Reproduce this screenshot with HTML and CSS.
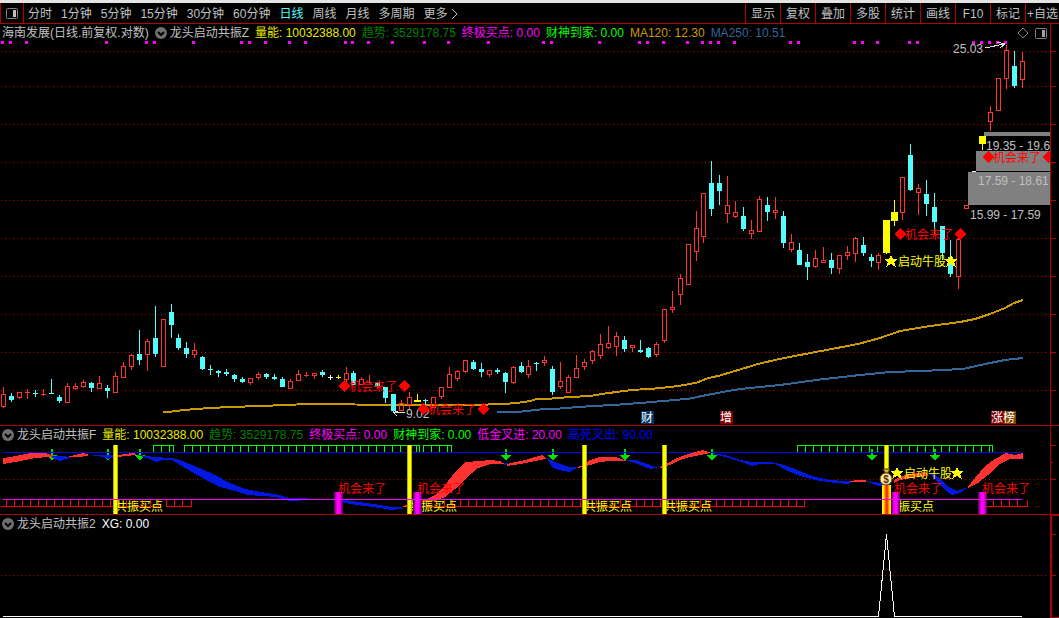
FILE: index.html
```
<!DOCTYPE html>
<html lang="zh-CN">
	<head>
		<meta charset="utf-8">
		<title>海南发展 日线</title>
		<link rel="stylesheet" href="styles.css">
	</head>
	<body>
		<header class="toolbar">
			<button class="side" aria-label="侧栏">
				<svg width="12" height="11" viewBox="0 0 12 11"><rect x="0.5" y="0.5" width="11" height="10" rx="1" fill="none" stroke="#808080"/><path d="M7 2h3v7h-3z" fill="#c0c0c0"/></svg>
			</button>
			<nav class="periods">
				<button>分时</button>
				<button>1分钟</button>
				<button>5分钟</button>
				<button>15分钟</button>
				<button>30分钟</button>
				<button>60分钟</button>
				<button class="active">日线</button>
				<button>周线</button>
				<button>月线</button>
				<button>多周期</button>
				<button>更多<svg width="7" height="12" viewBox="0 0 7 12"><path d="M1 1l5 5-5 5" fill="none" stroke="#c0c0c0"/></svg></button>
			</nav>
			<nav class="tools">
				<button>显示</button>
				<button>复权</button>
				<button>叠加</button>
				<button>多股</button>
				<button>统计</button>
				<button>画线</button>
				<button>F10</button>
				<button>标记</button>
				<button>+自选</button>
			</nav>
		</header>

		<main>
			<section class="panel">
				<div class="legend">
					<h1>海南发展(日线.前复权.对数)</h1>
					<button class="fold" aria-label="指标菜单"><svg width="12" height="12" viewBox="0 0 12 12"><circle cx="6" cy="6" r="6" fill="#707070"/><path d="M3 5l3 3 3-3" fill="none" stroke="#000" stroke-width="2"/></svg></button>
					<h2>龙头启动共振Z</h2>
					<span class="yellow">量能: 10032388.00</span>
					<span class="dark-green">趋势: 3529178.75</span>
					<span class="magenta">终极买点: 0.00</span>
					<span class="green">财神到家: 0.00</span>
					<span class="gold">MA120: 12.30</span>
					<span class="steel">MA250: 10.51</span>
					<div class="legend-tools">
						<button aria-label="标记"><svg width="12" height="12" viewBox="0 0 12 12"><path d="M6 1l5 5-5 5-5-5z" fill="none" stroke="#808080"/></svg></button>
						<button aria-label="布局"><svg width="12" height="11" viewBox="0 0 12 11"><rect x="0.5" y="0.5" width="11" height="10" rx="1" fill="none" stroke="#808080"/><path d="M7 2h3v7h-3z" fill="#a0a0a0"/></svg></button>
					</div>
				</div>
				<svg class="chart" viewBox="0 40 1059 385" role="img" aria-label="日线K线图">
					<g id="grid"></g>
					<g id="signals" fill="#ff00ff"></g>
					<path class="ma gold-line" d="M163 412L172 411.500 180 410.500 190 409.500 203 408.500 220 407.500 245 406.500 262 406 285 405 320 403.500 347 403.500 355 404.500 410 405 480 405 497 404 510 403.500 520 402.500 530 401 537 399 552 398.500 570 397 590 396 605 393.500 620 391.500 632 390 655 388.500 670 387 685 385 697 382.500 707 378.500 720 375.500 740 369.500 758 364 775 360 792 356.500 813 352.500 837 348 860 343.500 880 338 900 331 930 326 960 322 975 319 990 314 1005 308 1014 303 1023 300"/>
					<path class="ma steel-line" d="M497 412.500L513 412 522 411.500 545 409 560 408.500 578 407 595 406 620 404.500 640 403 657 401.500 675 400 690 398.500 697 397 707 395 725 391.500 740 389 780 385 820 379.500 860 375 890 372 920 371 945 370 965 368.500 985 364 1005 360 1023 358"/>
					<g id="candles"></g>
					<g fill="#808080">
						<rect x="984" y="132" width="66" height="4"/>
						<rect x="976" y="151" width="74" height="20"/>
						<rect x="968" y="172" width="82" height="33"/>
					</g>
					<path d="M982 136h1v14h-1zM979 136h7v8h-7z" fill="#ffff00"/>
					<rect x="972" y="171" width="4" height="1" fill="#fff"/>
					<g class="quote">
						<text x="953" y="53">25.03</text>
						<text x="406" y="418">9.02</text>
						<text x="986" y="150">19.35 - 19.6</text>
						<text x="978" y="185">17.59 - 18.61</text>
						<text x="970" y="219">15.99 - 17.59</text>
					</g>
					<path class="pointer" d="M985 48L1004 44M997 42L1005 44 1000 48"/>
					<path class="pointer" d="M405 412.500H394M397 416L394 412.500 398 411"/>
					<g id="chances"></g>
					<g class="badges">
						<rect x="641" y="411" width="13" height="13" fill="#003366"/>
						<text x="641" y="422">财</text>
						<rect x="720" y="411" width="13" height="13" fill="#800000"/>
						<text x="720" y="422">增</text>
						<rect x="991" y="411" width="13" height="13" fill="#800000"/>
						<rect x="1004" y="411" width="12" height="13" fill="#804000"/>
						<text x="991" y="422">涨榜</text>
					</g>
					<rect x="1051" y="145" width="8" height="20" fill="#000"/>
					<g class="axis">
						<rect x="1050" y="40" width="1" height="385"/>
						<rect x="1051" y="162" width="5" height="1"/>
					</g>
				</svg>
			</section>

			<section class="panel">
				<div class="legend">
					<button class="fold" aria-label="指标菜单"><svg width="12" height="12" viewBox="0 0 12 12"><circle cx="6" cy="6" r="6" fill="#707070"/><path d="M3 5l3 3 3-3" fill="none" stroke="#000" stroke-width="2"/></svg></button>
					<h2>龙头启动共振F</h2>
					<span class="yellow">量能: 10032388.00</span>
					<span class="dark-green">趋势: 3529178.75</span>
					<span class="magenta">终极买点: 0.00</span>
					<span class="green">财神到家: 0.00</span>
					<span class="magenta">低金叉进: 20.00</span>
					<span class="blue">高死叉出: 90.00</span>
				</div>
				<svg class="chart" viewBox="0 442 1059 72" role="img" aria-label="共振副图">
					<defs>
						<linearGradient id="purple">
							<stop offset="0" stop-color="#500050"/>
							<stop offset="0.35" stop-color="#ff00ff"/>
							<stop offset="0.65" stop-color="#ff00ff"/>
							<stop offset="1" stop-color="#500050"/>
						</linearGradient>
						<linearGradient id="fire">
							<stop offset="0" stop-color="#ffff00"/>
							<stop offset="0.2" stop-color="#ffe000"/>
							<stop offset="0.45" stop-color="#ff3000"/>
							<stop offset="0.6" stop-color="#ff3000"/>
							<stop offset="0.85" stop-color="#ffe000"/>
							<stop offset="1" stop-color="#ffff00"/>
						</linearGradient>
					</defs>
					<line class="dots" x1="1" y1="479.500" x2="1048" y2="479.500"/>
					<g id="combs"></g>
					<g id="arrows" fill="#00e000"></g>
					<rect x="3" y="452" width="1019" height="1" fill="#0000ff"/>
					<g class="band-blue">
						<path d="M50 456L60 456 72 457 66 459 60 461 56 460z"/>
						<path d="M90 455L100 455 118 455 112 458 108 459 103 457z"/>
						<path d="M137 455L148 456 154 457 172 458 180 460 192 465 202 469 215 475 230 483 245 489 260 492 275 494 290 498 325 499 345 500 360 502 380 505 392 507 402 507 402 509 390 510 380 508 365 506 350 504 330 500 310 500 290 501 275 497 262 496 248 495 235 491 220 487 210 482 197 475 185 468 172 460 163 460 156 462 150 459z"/>
						<path d="M502 463L509 463 505 465z"/>
						<path d="M547 458L553 461 560 464 570 467 578 467 570 472 563 471 553 468 550 463z"/>
						<path d="M625 460L635 460 645 463 655 467 662 465 656 468 650 469 645 467 635 463z"/>
						<path d="M711 453L725 455 740 460 752 462 770 462 780 464 790 467 802 472 815 477 830 480 845 481 855 481 848 484 835 483 815 480 800 476 788 471 775 464 760 464 752 466 742 462 725 457z"/>
						<path d="M866 481L874 482 884 484 884 486 878 486z"/>
						<path d="M928 473L935 475 940 478 947 486 957 491 968 487 960 493 952 495 945 490 938 482z"/>
					</g>
					<g class="band-red">
						<path d="M3 458L10 457 20 455 30 453 45 453 56 456 48 457 35 458 25 460 15 462 8 463 3 464z"/>
						<path d="M67 457L75 455 83 453 90 455 80 457z"/>
						<path d="M118 455L125 454 133 453 137 454 135 455 118 457z"/>
						<path d="M402 507L409 504 409 507z"/>
						<path d="M425 500L435 495 445 485 455 472 465 462 480 461 490 460 500 461 505 464 490 464 478 468 465 479 455 489 445 497 435 501 420 502z"/>
						<path d="M507 464L515 462 525 460 535 457 543 455 546 459 535 461 520 464 507 466z"/>
						<path d="M578 467L583 465 590 460 600 457 615 457 622 459 627 461 610 461 600 462 590 465 578 468z"/>
						<path d="M662 465L668 463 675 459 685 455 695 452 703 450 711 453 700 455 690 457 680 460 670 465 660 468z"/>
						<path d="M850 481L858 480 866 480 866 482 850 482z"/>
						<path d="M894 480L900 477 908 474 925 472 929 475 910 478 900 480 894 483z"/>
						<path d="M968 487L975 478 985 466 995 459 1006 453 1015 455 1023 453 1023 459 1010 459 1000 464 988 475 978 483 968 488z"/>
					</g>
					<g class="label-yellow">
						<text x="115" y="511">共振买点</text>
						<text x="409" y="511">共振买点</text>
						<text x="584" y="511">共振买点</text>
						<text x="664" y="511">共振买点</text>
						<text x="886" y="511">共振买点</text>
					</g>
					<g id="bars"></g>
					<rect x="3" y="499" width="1019" height="1" fill="#ff00ff"/>
					<g class="label-red">
						<text x="338" y="493">机会来了</text>
						<text x="417" y="493">机会来了</text>
						<text x="894" y="493">机会来了</text>
						<text x="982" y="493">机会来了</text>
					</g>
					<g id="bull"></g>
					<g class="bag">
						<path d="M883 469h7l-2 4h-3z" fill="#d8b040" stroke="#503000"/>
						<circle cx="886" cy="479" r="6" fill="#ffe8a0" stroke="#704818"/>
						<text x="886" y="483">$</text>
					</g>
					<g class="axis">
						<rect x="1050" y="442" width="1" height="72"/>
						<rect x="1051" y="445" width="5" height="1"/>
						<rect x="1051" y="462" width="2" height="1"/>
						<rect x="1051" y="479" width="5" height="1"/>
					</g>
				</svg>
			</section>

			<section class="panel last">
				<div class="legend">
					<button class="fold" aria-label="指标菜单"><svg width="12" height="12" viewBox="0 0 12 12"><circle cx="6" cy="6" r="6" fill="#707070"/><path d="M3 5l3 3 3-3" fill="none" stroke="#000" stroke-width="2"/></svg></button>
					<h2>龙头启动共振2</h2>
					<span class="white">XG: 0.00</span>
				</div>
				<svg class="chart" viewBox="0 531 1059 87" role="img" aria-label="选股信号">
					<line class="dots" x1="1" y1="575.500" x2="1048" y2="575.500"/>
					<path d="M3 616.500H878.500L886.500 534.500 894.500 616.500H1022" fill="none" stroke="#fff"/>
					<g class="axis">
						<rect x="1050" y="531" width="2" height="87"/>
						<rect x="1052" y="534" width="4" height="1"/>
						<rect x="1052" y="555" width="1" height="1"/>
						<rect x="1052" y="575" width="4" height="1"/>
						<rect x="1052" y="617" width="7" height="1"/>
					</g>
				</svg>
			</section>
		</main>

		<script src="chart.js"></script>
	</body>
</html>
```

FILE: styles.css
```
body {
	background: #000;
	border-top: 3px solid #e4e4e4;
	color: #c0c0c0;
	font-family: "Liberation Sans", "Noto Sans CJK SC", sans-serif;
	font-size: 12px;
	line-height: 16px;
	margin: 0;
}
button {
	align-items: center;
	background: none;
	border: 0;
	color: inherit;
	cursor: pointer;
	display: flex;
	font: inherit;
	padding: 0;
	white-space: nowrap;
}
h1,
h2 {
	font-size: 12px;
	font-weight: normal;
	margin: 0;
}

.toolbar {
	border-bottom: 1px solid #b00000;
	display: flex;
	height: 20px;
}
.side {
	border-left: 1px solid #b00000;
	border-right: 1px solid #b00000;
	justify-content: center;
	width: 24px;
}
.periods {
	display: flex;
	flex: 1;
	gap: 9px;
	padding-left: 4px;
}
.periods button,
.tools button {
	padding-top: 2px;
}
.periods svg {
	margin-left: 3px;
}
.periods .active {
	color: #54fcfc;
}
.tools {
	display: flex;
}
.tools button {
	border-left: 1px solid #b00000;
	justify-content: center;
	width: 35px;
}
.tools button:last-child {
	width: 34px;
}

.panel {
	border-bottom: 1px solid #b00000;
}
.panel.last {
	border-bottom: 0;
	position: relative;
}
.panel.last::before {
	background: #b00000;
	content: '';
	height: 1px;
	position: absolute;
	right: 0;
	top: 0;
	width: 9px;
}
.legend {
	align-items: center;
	border-right: 1px solid #b00000;
	box-sizing: border-box;
	display: flex;
	gap: 6px;
	height: 16px;
	margin-right: 8px;
	padding-left: 2px;
	padding-top: 2px;
	white-space: nowrap;
}
.last .legend {
	border-right-width: 2px;
	margin-right: 7px;
}
.legend .fold {
	margin-right: -3px;
}
.legend-tools {
	display: flex;
	gap: 6px;
	margin-left: auto;
	padding-right: 3px;
}
.yellow {
	color: #e8e800;
}
.dark-green {
	color: #008000;
}
.magenta {
	color: #ff00ff;
}
.green {
	color: #00ff00;
}
.gold {
	color: #cc9900;
}
.steel {
	color: #336699;
}
.blue {
	color: #0000ff;
}
.white {
	color: #fff;
}

.chart {
	display: block;
	height: auto;
	shape-rendering: crispEdges;
	width: 100%;
}
.dots {
	stroke: #b00000;
	stroke-dasharray: 1 3;
}
.axis {
	fill: #b00000;
}
.ma {
	fill: none;
	stroke-width: 2;
}
.gold-line {
	stroke: #cc9900;
}
.steel-line {
	stroke: #336699;
}
.pointer {
	fill: none;
	stroke: #e0e0e0;
}
.quote text {
	fill: #c0c0c0;
}
.badges text {
	fill: #fff;
}
.label-red {
	fill: #ff0000;
}
.label-yellow {
	fill: #ffff00;
}
.band-blue {
	fill: #0018e0;
}
.band-red {
	fill: #ff3232;
}
.bag {
	shape-rendering: auto;
}
.bag text {
	fill: #503000;
	font-size: 10px;
	font-weight: bold;
	text-anchor: middle;
}
```

FILE: chart.js
```
var NS = 'http://www.w3.org/2000/svg',
	RED = '#ff3232',
	CYAN = '#54fcfc',
	AXIS = '#b00000';

// x, high, top of body, bottom of body, low, kind
// u = up, d = down, y = yellow, Y = wide yellow, w = white
var candles = [
	[3, 387, 394, 407, 408, 'u'], [11, 393, 396, 400, 402, 'd'], [19, 392, 392, 398, 399, 'u'],
	[27, 389, 392, 393, 399, 'u'], [35, 390, 393, 394, 397, 'd'], [43, 389, 394, 395, 396, 'u'],
	[51, 379, 393, 394, 394, 'd'], [59, 395, 397, 401, 403, 'd'], [67, 383, 386, 403, 403, 'u'],
	[75, 383, 386, 389, 390, 'u'], [83, 380, 382, 387, 388, 'u'], [91, 382, 383, 388, 392, 'd'],
	[99, 376, 383, 389, 389, 'u'], [107, 385, 388, 391, 398, 'd'], [115, 372, 376, 393, 393, 'u'],
	[123, 362, 366, 378, 378, 'u'], [131, 354, 355, 367, 370, 'u'], [139, 330, 354, 360, 365, 'd'],
	[147, 339, 341, 355, 371, 'u'], [155, 306, 338, 354, 357, 'd'], [163, 319, 319, 367, 367, 'u'],
	[171, 304, 312, 325, 338, 'd'], [178, 334, 338, 348, 350, 'd'], [186, 342, 348, 354, 358, 'd'],
	[194, 343, 350, 355, 358, 'u'], [202, 356, 357, 369, 370, 'd'], [210, 365, 369, 370, 375, 'd'],
	[218, 370, 371, 373, 377, 'd'], [226, 369, 372, 374, 376, 'd'], [234, 374, 375, 379, 382, 'd'],
	[242, 377, 379, 382, 383, 'd'], [250, 378, 378, 383, 385, 'u'], [258, 372, 374, 378, 380, 'u'],
	[266, 373, 374, 377, 379, 'd'], [274, 374, 377, 379, 380, 'd'], [282, 377, 379, 387, 387, 'd'],
	[290, 379, 381, 389, 389, 'u'], [298, 370, 374, 381, 381, 'u'], [306, 372, 375, 376, 377, 'u'],
	[314, 373, 373, 376, 379, 'u'], [322, 370, 372, 375, 377, 'd'], [330, 375, 377, 378, 380, 'w'],
	[338, 375, 377, 378, 379, 'y'], [346, 367, 373, 380, 382, 'u'], [353, 371, 373, 385, 385, 'd'],
	[361, 377, 379, 385, 385, 'u'], [369, 375, 382, 383, 383, 'u'], [377, 382, 383, 386, 388, 'd'],
	[385, 387, 387, 398, 403, 'd'], [393, 394, 394, 411, 413, 'd'], [401, 400, 403, 411, 411, 'u'],
	[409, 392, 397, 405, 409, 'u'], [417, 394, 400, 402, 402, 'Y'], [425, 399, 400, 401, 405, 'd'],
	[433, 397, 397, 408, 408, 'u'], [441, 387, 387, 397, 399, 'u'], [449, 367, 374, 388, 388, 'u'],
	[457, 370, 371, 379, 381, 'u'], [465, 360, 360, 372, 373, 'u'], [473, 360, 362, 369, 370, 'd'],
	[481, 363, 369, 372, 377, 'd'], [489, 370, 370, 375, 377, 'u'], [497, 368, 370, 372, 374, 'd'],
	[505, 372, 373, 382, 393, 'd'], [513, 366, 367, 383, 384, 'u'], [521, 362, 366, 372, 373, 'd'],
	[528, 360, 366, 375, 378, 'u'], [536, 362, 363, 364, 371, 'd'], [544, 356, 360, 363, 366, 'u'],
	[552, 366, 369, 392, 395, 'd'], [560, 362, 381, 387, 389, 'u'], [568, 375, 377, 393, 393, 'u'],
	[576, 355, 368, 378, 378, 'u'], [584, 359, 362, 367, 370, 'u'], [592, 350, 351, 361, 364, 'u'],
	[600, 334, 344, 356, 359, 'u'], [608, 326, 343, 348, 349, 'u'], [616, 332, 336, 347, 356, 'u'],
	[624, 336, 340, 349, 352, 'd'], [632, 345, 345, 348, 352, 'u'], [640, 340, 350, 352, 353, 'd'],
	[648, 347, 348, 357, 358, 'd'], [656, 342, 344, 355, 357, 'u'], [664, 309, 309, 341, 343, 'u'],
	[672, 291, 307, 310, 313, 'u'], [680, 274, 278, 295, 305, 'u'], [688, 244, 244, 285, 285, 'u'],
	[696, 211, 228, 252, 261, 'u'], [703, 193, 193, 237, 243, 'u'], [711, 161, 183, 209, 216, 'd'],
	[719, 175, 183, 191, 205, 'd'], [727, 176, 205, 214, 223, 'u'], [735, 201, 212, 217, 218, 'u'],
	[743, 207, 216, 229, 231, 'd'], [751, 220, 230, 234, 239, 'u'], [759, 196, 199, 232, 232, 'u'],
	[767, 197, 205, 212, 221, 'd'], [775, 197, 210, 213, 219, 'u'], [783, 211, 216, 243, 248, 'd'],
	[791, 234, 242, 250, 252, 'u'], [799, 243, 250, 265, 265, 'd'], [807, 254, 262, 267, 280, 'd'],
	[815, 250, 258, 267, 268, 'u'], [823, 247, 260, 263, 263, 'u'], [831, 253, 260, 268, 274, 'd'],
	[839, 255, 255, 269, 274, 'u'], [847, 246, 252, 256, 260, 'u'], [855, 237, 238, 254, 262, 'u'],
	[863, 237, 245, 253, 256, 'd'], [871, 254, 257, 261, 267, 'd'], [878, 253, 255, 263, 270, 'u'],
	[886, 220, 220, 253, 254, 'Y'], [894, 200, 212, 221, 226, 'Y'], [902, 177, 177, 213, 220, 'u'],
	[910, 144, 155, 190, 191, 'd'], [918, 184, 188, 193, 215, 'u'], [926, 180, 194, 204, 216, 'd'],
	[934, 193, 207, 222, 234, 'd'], [942, 226, 226, 253, 260, 'd'], [950, 240, 257, 274, 277, 'd'],
	[958, 238, 239, 277, 289, 'u'], [966, 205, 205, 209, 209, 'u'], [990, 106, 112, 122, 131, 'u'],
	[998, 78, 78, 111, 111, 'u'], [1006, 45, 50, 79, 89, 'u'], [1014, 51, 66, 86, 88, 'd'],
	[1022, 52, 61, 80, 88, 'u']
];

var signals = [2, 10, 26, 106, 146, 154, 193, 241, 249, 265, 289, 305, 345, 352, 368, 392, 424, 448,
	488, 543, 551, 599, 639, 647, 663, 687, 702, 710, 718, 734, 790, 798, 854, 862, 877, 909, 917,
	973, 981, 989, 997, 1005];

function add(parent, name, attrs, text) {
	var el = document.createElementNS(NS, name);
	for (var key in attrs) {
		el.setAttribute(key, attrs[key]);
	}
	if (text) {
		el.textContent = text;
	}
	parent.appendChild(el);
	return el;
}
function box(parent, x, y, w, h, fill) {
	var attrs = { x: x, y: y, width: w, height: h };
	if (fill) {
		attrs.fill = fill;
	}
	add(parent, 'rect', attrs);
}
function get(id) {
	return document.getElementById(id);
}

function drawGrid() {
	[51, 86, 124, 162, 200, 238, 276, 314, 352, 390].forEach(function (y) {
		add(get('grid'), 'line', { 'class': 'dots', x1: 1, y1: y + 0.5, x2: 1048, y2: y + 0.5 });
		box(get('grid'), 1051, y, 5, 1, AXIS);
	});
}
function drawCandle(c) {
	var g = get('candles'),
		x = c[0], high = c[1], top = c[2], bottom = c[3], low = c[4],
		color = { u: RED, d: CYAN, w: '#ffffff', y: '#ffff00', Y: '#ffff00' }[c[5]],
		half = c[5] === 'Y' ? 3 : 2;

	if (top > high) {
		box(g, x, high, 1, top - high, color);
	}
	if (low > bottom) {
		box(g, x, bottom, 1, low - bottom, color);
	}
	if (c[5] === 'u' && bottom - top > 2) {
		add(g, 'rect', { x: x - 1.5, y: top + 0.5, width: 4, height: bottom - top - 1, fill: 'none', stroke: color });
	} else {
		box(g, x - half, top, half * 2 + 1, bottom - top, color);
	}
}
function diamond(parent, x, y) {
	add(parent, 'path', { d: 'M' + (x - 5) + ' ' + y + 'l6 -6 6 6 -6 6z', fill: '#ff0000' });
}
function star(parent, x, y) {
	add(parent, 'path', { d: 'M' + x + ' ' + (y - 6) + 'l2 4h5l-4 3 2 5 -5 -3 -5 3 2 -5 -4 -3h5z', fill: '#ffff00' });
}
function drawChance(x, y) {
	var g = get('chances');
	diamond(g, x, y);
	add(g, 'text', { x: x + 6, y: y + 5, fill: '#ff0000' }, '机会来了');
	diamond(g, x + 60, y);
}
function drawBull(parent, x, y) {
	star(parent, x, y);
	add(parent, 'text', { x: x + 7, y: y + 5, fill: '#ffff00' }, '启动牛股');
	star(parent, x + 60, y);
}
// a rail with a tooth every 8 pixels
function comb(from, to, first, rail, color) {
	var g = get('combs'), top = rail === 445 ? 445 : 500;
	box(g, from, rail, to - from, 1, color);
	for (var x = first; x < to - 3; x += 8) {
		box(g, x, top, 1, 7, color);
	}
	box(g, to - 1, top, 1, 7, color);
}

drawGrid();
signals.forEach(function (x) {
	box(get('signals'), x - 1, 41, 3, 3);
});
candles.forEach(drawCandle);
drawChance(343, 386);
drawChance(422, 409);
drawChance(899, 234);
drawChance(987, 157);
drawBull(get('chances'), 891, 261);
drawBull(get('bull'), 897, 473);

comb(153, 174, 153, 445, '#00ff00');
comb(184, 420, 184, 445, '#00ff00');
comb(423, 452, 423, 445, '#00ff00');
comb(797, 993, 797, 445, '#00ff00');
comb(1, 159, 6, 506, '#ff0000');
comb(166, 192, 166, 506, '#ff0000');
comb(417, 805, 420, 506, '#ff0000');
comb(987, 1028, 993, 506, '#ff0000');

[52, 108, 140, 506, 553, 625, 712, 872, 935].forEach(function (x) {
	add(get('arrows'), 'path', { d: 'M' + (x - 1) + ' 449h2v6h4l-5 6 -5 -6h4z' });
});
[113, 407, 582, 662, 884].forEach(function (x) {
	var h = x === 884 ? 26 : 69;
	box(get('bars'), x, 445, 5, h, '#b0b000');
	box(get('bars'), x + 1, 445, 3, h, '#ffff00');
});
box(get('bars'), 882, 485, 9, 29, 'url(#fire)');
[334, 413, 891, 978].forEach(function (x) {
	box(get('bars'), x, 492, 9, 22, 'url(#purple)');
});
```
